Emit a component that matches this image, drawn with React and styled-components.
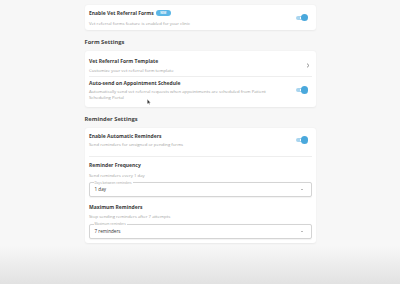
import React from "react";
import styled, { createGlobalStyle } from "styled-components";

const GlobalStyle = createGlobalStyle`
  html, body {
    margin: 0;
    padding: 0;
  }
  body {
    min-height: 284px;
    background: linear-gradient(to bottom, #f7f7f7 0, #f7f7f7 246px, #e2e2e2 284px);
    font-family: "Open Sans", "Noto Sans", sans-serif;
    color: #3a3a3a;
  }
`;

const Page = styled.div`
  position: relative;
  width: 231px;
  margin: 0 auto;
  padding-top: 4.7px;
  padding-bottom: 30px;
`;

const Card = styled.div`
  background: #fff;
  border-radius: 3px;
  box-shadow: 0 0.5px 2px rgba(0, 0, 0, 0.06);
  padding: 0 4px 0 4.5px;
`;

const SectionTitle = styled.h2`
  margin: 8px 0 5px;
  font-size: 5.8px;
  line-height: 8px;
  font-weight: 700;
  color: #454545;
`;

const Row = styled.div`
  display: flex;
  align-items: center;
  padding: ${(p) => p.$pt}px 0 ${(p) => p.$pb}px;
`;

const RowText = styled.div`
  flex: 1;
  min-width: 0;
`;

const Title = styled.div`
  display: flex;
  align-items: center;
  font-size: 5px;
  line-height: 7px;
  font-weight: 700;
  color: #3a3a3a;
`;

const Sub = styled.div`
  margin-top: ${(p) => p.$gap}px;
  font-size: 4.3px;
  line-height: 6px;
  color: #a3a3a3;
`;

const Badge = styled.span`
  margin-left: 2px;
  width: 15px;
  height: 6px;
  border-radius: 3px;
  background: #5bb6e6;
  color: #fff;
  font-size: 2.6px;
  line-height: 6px;
  font-weight: 700;
  text-align: center;
`;

const Divider = styled.div`
  height: 1px;
  background: #eeeeee;
`;

const SwitchWrap = styled.div`
  position: relative;
  flex: none;
  width: 12px;
  height: 7.3px;
  margin: 0 3.5px 0 10px;
`;

const Track = styled.div`
  position: absolute;
  left: 0;
  top: 1.5px;
  width: 10px;
  height: 4.5px;
  border-radius: 2.3px;
  background: #a9d5ef;

  &::before {
    content: "";
    position: absolute;
    left: 3.5px;
    top: 1.3px;
    width: 1px;
    height: 2px;
    background: #fff;
  }
`;

const Thumb = styled.div`
  position: absolute;
  right: 0;
  top: 0;
  width: 7.3px;
  height: 7.3px;
  border-radius: 50%;
  background: #4aa8dc;
`;

const Chevron = styled.svg`
  flex: none;
  width: 4px;
  height: 5px;
  margin-right: 2px;
`;

const Fields = styled.div`
  display: flex;
  flex-direction: column;
  gap: 7.1px;
  padding: 5.2px 0 4.8px;
`;

const Field = styled.div`
  display: flex;
  flex-direction: column;
`;

const SelectBox = styled.div`
  position: relative;
  margin-top: 4.2px;
  height: 15px;
  box-sizing: border-box;
  border: 0.8px solid #d4d4d4;
  border-radius: 2px;
  box-shadow: 0 0.5px 1px rgba(0, 0, 0, 0.05);
  display: flex;
  align-items: center;
  padding: 0 4.5px;
  font-size: 4.6px;
  color: #333;
`;

const SelectLabel = styled.span`
  position: absolute;
  left: 3.5px;
  top: -2.2px;
  padding: 0 1px;
  background: #fff;
  font-size: 3.2px;
  line-height: 4px;
  color: #a8a8a8;
`;

const Arrow = styled.span`
  margin-left: auto;
  margin-right: 3px;
  width: 0;
  height: 0;
  border-left: 1.5px solid transparent;
  border-right: 1.5px solid transparent;
  border-top: 1.8px solid #777;
`;

const Cursor = styled.svg`
  position: absolute;
  left: 62px;
  top: 99px;
  width: 4px;
  height: 6px;
`;

const Switch = () => (
  <SwitchWrap>
    <Track />
    <Thumb />
  </SwitchWrap>
);

const Select = ({ label, value }) => (
  <SelectBox>
    <SelectLabel>{label}</SelectLabel>
    {value}
    <Arrow />
  </SelectBox>
);

export default function App() {
  return (
    <>
      <GlobalStyle />
      <Page>
        <Card>
          <Row $pt={5} $pb={4.3}>
            <RowText>
              <Title>
                Enable Vet Referral Forms <Badge>NEW</Badge>
              </Title>
              <Sub $gap={3}>Vet referral forms feature is enabled for your clinic</Sub>
            </RowText>
            <Switch />
          </Row>
        </Card>

        <SectionTitle>Form Settings</SectionTitle>
        <Card>
          <Row $pt={7.5} $pb={3}>
            <RowText>
              <Title>Vet Referral Form Template</Title>
              <Sub $gap={1.5}>Customize your vet referral form template</Sub>
            </RowText>
            <Chevron viewBox="0 0 4 5">
              <polyline points="1,0.6 3,2.5 1,4.4" fill="none" stroke="#777" strokeWidth="0.8" />
            </Chevron>
          </Row>
          <Divider />
          <Row $pt={3} $pb={7.3}>
            <RowText>
              <Title>Auto-send on Appointment Schedule</Title>
              <Sub $gap={1}>
                Automatically send vet referral requests when appointments are scheduled from Patient
                Scheduling Portal
              </Sub>
            </RowText>
            <Switch />
          </Row>
        </Card>

        <SectionTitle>Reminder Settings</SectionTitle>
        <Card>
          <Row $pt={4.5} $pb={9}>
            <RowText>
              <Title>Enable Automatic Reminders</Title>
              <Sub $gap={1.2}>Send reminders for unsigned or pending forms</Sub>
            </RowText>
            <Switch />
          </Row>
          <Divider />
          <Fields>
            <Field>
              <Title>Reminder Frequency</Title>
              <Sub $gap={2.5}>Send reminders every 1 day</Sub>
              <Select label="Days between reminders" value="1 day" />
            </Field>
            <Field>
              <Title>Maximum Reminders</Title>
              <Sub $gap={2.5}>Stop sending reminders after 7 attempts</Sub>
              <Select label="Maximum reminders" value="7 reminders" />
            </Field>
          </Fields>
        </Card>

        <Cursor viewBox="0 0 4 6">
          <path d="M0.3,0.3 L0.3,5 L1.4,4 L2.2,5.6 L2.9,5.3 L2.1,3.7 L3.6,3.7 Z" fill="#333" stroke="#fff" strokeWidth="0.3" />
        </Cursor>
      </Page>
    </>
  );
}
